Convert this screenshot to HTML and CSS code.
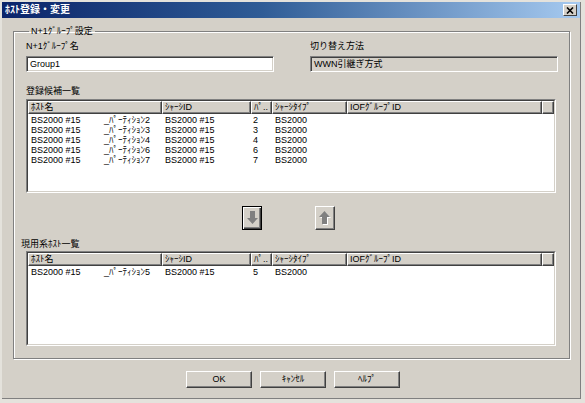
FILE: index.html
```html
<!DOCTYPE html>
<html>
<head>
<meta charset="utf-8">
<link rel="stylesheet" href="styles.css">
</head>
<body>
<div class="window">
  <div class="titlebar">
    <span class="title">ﾎｽﾄ登録・変更</span>
    <span class="close"><svg width="8" height="7" viewBox="0 0 8 7"><path d="M1 0.5 L7 6.5 M7 0.5 L1 6.5" stroke="#000" stroke-width="1.6"/></svg></span>
  </div>
  <fieldset class="group">
    <legend>N+1ｸﾞﾙｰﾌﾟ設定</legend>
    <div class="fields">
      <div class="field left">
        <div class="lbl">N+1ｸﾞﾙｰﾌﾟ名</div>
        <div class="edit">Group1</div>
      </div>
      <div class="field right">
        <div class="lbl">切り替え方法</div>
        <div class="edit ro">WWN引継ぎ方式</div>
      </div>
    </div>
    <div class="lbl sect">登録候補一覧</div>
    <div class="list">
      <div class="list-in">
        <div class="hdr">
          <div class="h c1">ﾎｽﾄ名</div><div class="h c2">ｼｬｰｼID</div><div class="h c3">ﾊﾟ..</div><div class="h c4">ｼｬｰｼﾀｲﾌﾟ</div><div class="h c5">IOFｸﾞﾙｰﾌﾟID</div><div class="h c6"></div>
        </div>
        <div class="row"><div class="d c1"><span class="host">BS2000 #15</span>_ﾊﾟｰﾃｨｼｮﾝ2</div><div class="d c2">BS2000 #15</div><div class="d c3">2</div><div class="d c4">BS2000</div></div>
        <div class="row"><div class="d c1"><span class="host">BS2000 #15</span>_ﾊﾟｰﾃｨｼｮﾝ3</div><div class="d c2">BS2000 #15</div><div class="d c3">3</div><div class="d c4">BS2000</div></div>
        <div class="row"><div class="d c1"><span class="host">BS2000 #15</span>_ﾊﾟｰﾃｨｼｮﾝ4</div><div class="d c2">BS2000 #15</div><div class="d c3">4</div><div class="d c4">BS2000</div></div>
        <div class="row"><div class="d c1"><span class="host">BS2000 #15</span>_ﾊﾟｰﾃｨｼｮﾝ6</div><div class="d c2">BS2000 #15</div><div class="d c3">6</div><div class="d c4">BS2000</div></div>
        <div class="row"><div class="d c1"><span class="host">BS2000 #15</span>_ﾊﾟｰﾃｨｼｮﾝ7</div><div class="d c2">BS2000 #15</div><div class="d c3">7</div><div class="d c4">BS2000</div></div>
      </div>
    </div>
    <div class="arrows">
      <div class="abtn down"><svg width="11" height="14" viewBox="0 0 11 14"><path d="M3 0 H8 V7 H11 L5.5 13 L0 7 H3 Z" fill="#808080"/></svg></div>
      <div class="abtn up"><svg width="12" height="15" viewBox="0 0 12 15"><path d="M4 14 H9 V7 H12 L6.5 1 L1 7 H4 Z" fill="#fff"/><path d="M3 13 H8 V6 H11 L5.5 0 L0 6 H3 Z" fill="#808080"/></svg></div>
    </div>
    <div class="lbl sect2">現用系ﾎｽﾄ一覧</div>
    <div class="list list2">
      <div class="list-in">
        <div class="hdr">
          <div class="h c1">ﾎｽﾄ名</div><div class="h c2">ｼｬｰｼID</div><div class="h c3">ﾊﾟ..</div><div class="h c4">ｼｬｰｼﾀｲﾌﾟ</div><div class="h c5">IOFｸﾞﾙｰﾌﾟID</div><div class="h c6"></div>
        </div>
        <div class="row"><div class="d c1"><span class="host">BS2000 #15</span>_ﾊﾟｰﾃｨｼｮﾝ5</div><div class="d c2">BS2000 #15</div><div class="d c3">5</div><div class="d c4">BS2000</div></div>
      </div>
    </div>
  </fieldset>
  <div class="buttons">
    <div class="btn">OK</div>
    <div class="btn">ｷｬﾝｾﾙ</div>
    <div class="btn">ﾍﾙﾌﾟ</div>
  </div>
</div>
</body>
</html>
```
FILE: styles.css
```css
html, body {
  margin: 0;
  padding: 0;
}
body {
  background: #e4e2dc;
  width: 585px;
  height: 403px;
  overflow: hidden;
  font-family: "Liberation Sans", "Noto Sans CJK JP", sans-serif;
  font-size: 9px;
  color: #000;
}
.window {
  margin: 2px 0 0 2px;
  width: 579px;
  height: 397px;
  box-sizing: border-box;
  background: #d4d0c8;
  border-right: 1px solid #808080;
  border-bottom: 1px solid #808080;
}
.titlebar {
  height: 16px;
  background: linear-gradient(to right, #0a246a 0%, #2f5c96 45%, #a6caf0 100%);
  display: flex;
  align-items: center;
  justify-content: space-between;
  padding: 0 3px 0 3px;
}
.title {
  color: #fff;
  font-weight: bold;
  font-size: 10px;
  line-height: 16px;
}
.close {
  width: 14px;
  height: 12px;
  box-sizing: border-box;
  background: #d4d0c8;
  border: 1px solid;
  border-color: #fff #404040 #404040 #fff;
  display: flex;
  align-items: center;
  justify-content: center;
}
.group {
  margin: 8px 0 0 11px;
  width: 557px;
  box-sizing: border-box;
  padding: 4px 11px 12px 12px;
  border: 1px solid #808080;
  box-shadow: 1px 1px 0 #fff, inset 1px 1px 0 #fff;
  min-width: 0;
}
.group legend {
  padding: 0 2px;
  margin-left: 3px;
  line-height: 11px;
}
.fields {
  display: flex;
  justify-content: space-between;
}
.field {
  width: 248px;
}
.lbl {
  line-height: 11px;
  height: 11px;
}
.field .lbl {
  margin-bottom: 4px;
}
.edit {
  height: 16px;
  box-sizing: border-box;
  background: #fff;
  border: 1px solid;
  border-color: #808080 #fff #fff #808080;
  box-shadow: inset 1px 1px 0 #404040, inset -1px -1px 0 #d4d0c8;
  line-height: 14px;
  padding-left: 3px;
}
.edit.ro {
  background: #d4d0c8;
}
.sect {
  margin-top: 14px;
}
.list {
  margin-top: 2px;
  width: 530px;
  height: 94px;
  box-sizing: border-box;
  border: 1px solid;
  border-color: #808080 #fff #fff #808080;
}
.list-in {
  height: 100%;
  box-sizing: border-box;
  border: 1px solid;
  border-color: #404040 #d4d0c8 #d4d0c8 #404040;
  background: #fff;
  overflow: hidden;
}
.hdr {
  display: flex;
  height: 13px;
  background: #d4d0c8;
}
.h {
  box-sizing: border-box;
  height: 13px;
  line-height: 11px;
  border: 1px solid;
  border-color: #fff #404040 #404040 #fff;
  box-shadow: inset -1px -1px 0 #808080;
  padding-left: 2px;
  white-space: nowrap;
  overflow: hidden;
}
.c1 { width: 134px; }
.c2 { width: 89px; }
.c3 { width: 21px; }
.c4 { width: 75px; }
.c5 { width: 195px; }
.c6 { flex: 1; }
.row {
  display: flex;
  height: 10px;
  line-height: 10px;
}
.hdr + .row { margin-top: 1px; }
.d {
  box-sizing: border-box;
  padding-left: 3px;
  white-space: nowrap;
}
.d.c3 { padding-left: 2px; }
.host {
  display: inline-block;
  width: 73px;
}
.arrows {
  display: flex;
  margin-top: 13px;
  padding-left: 216px;
  gap: 53px;
  height: 24px;
}
.abtn {
  width: 20px;
  height: 24px;
  box-sizing: border-box;
  border: 1px solid;
  border-color: #fff #404040 #404040 #fff;
  box-shadow: inset -1px -1px 0 #808080;
  display: flex;
  align-items: center;
  justify-content: center;
}
.abtn.down {
  border: 1px solid #000;
  box-shadow: inset 1px 1px 0 #fff, inset -1px -1px 0 #404040, inset -2px -2px 0 #808080;
}
.sect2 {
  margin-top: 9px;
  margin-left: -5px;
}
.list2 {
  margin-top: 1px;
  height: 95px;
}
.buttons {
  display: flex;
  margin: 12px 0 0 184px;
  gap: 8px;
}
.btn {
  width: 66px;
  height: 17px;
  box-sizing: border-box;
  border: 1px solid;
  border-color: #fff #404040 #404040 #fff;
  box-shadow: inset -1px -1px 0 #808080;
  text-align: center;
  line-height: 15px;
}
```
